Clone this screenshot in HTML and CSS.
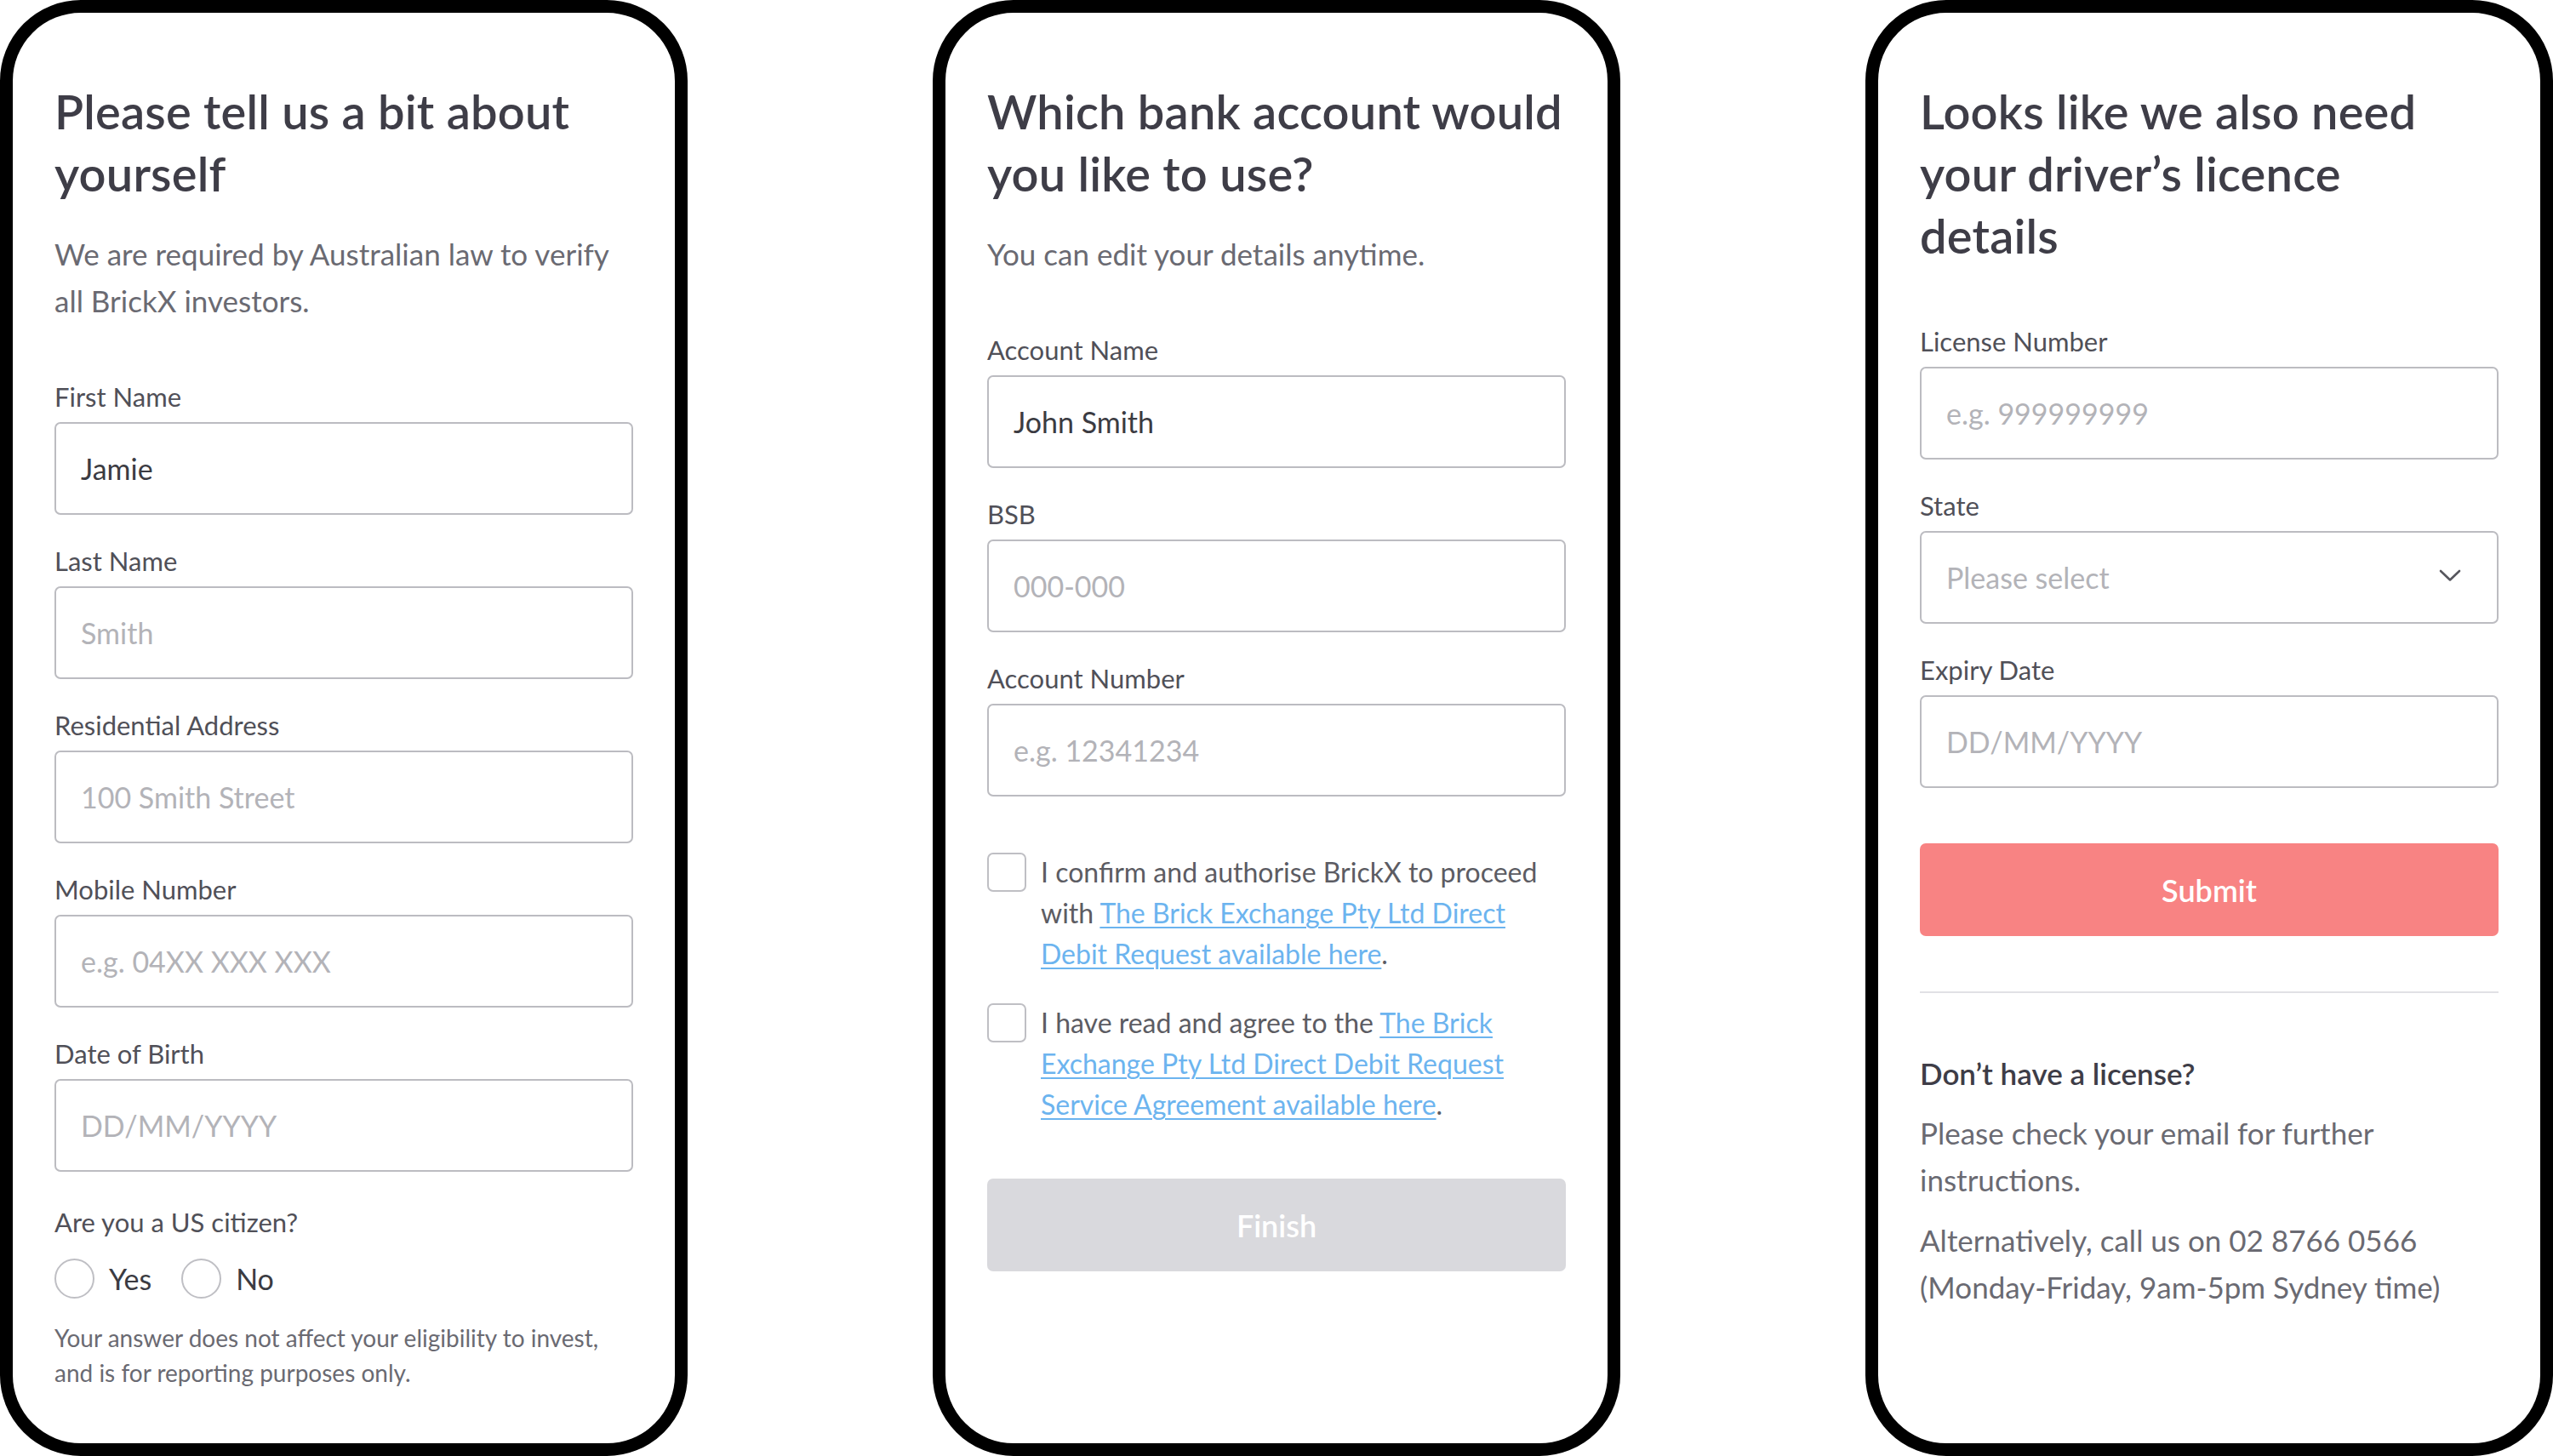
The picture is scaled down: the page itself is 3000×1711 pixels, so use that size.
FILE: index.html
```html
<!DOCTYPE html>
<html lang="en">
<head>
<meta charset="utf-8">
<title>BrickX onboarding</title>
<link rel="stylesheet" href="styles.css">
</head>
<body>
<main class="screens">
  <section class="phone">
    <h1 class="title">Please tell us a bit about yourself</h1>
    <p class="sub">We are required by Australian law to verify all BrickX investors.</p>
    <form class="form">
      <div class="field">
        <label class="label">First Name</label>
        <input class="input" type="text" value="Jamie">
      </div>
      <div class="field">
        <label class="label">Last Name</label>
        <input class="input" type="text" placeholder="Smith">
      </div>
      <div class="field">
        <label class="label">Residential Address</label>
        <input class="input" type="text" placeholder="100 Smith Street">
      </div>
      <div class="field">
        <label class="label">Mobile Number</label>
        <input class="input" type="text" placeholder="e.g. 04XX XXX XXX">
      </div>
      <div class="field">
        <label class="label">Date of Birth</label>
        <input class="input" type="text" placeholder="DD/MM/YYYY">
      </div>
      <div class="field field-radio">
        <label class="label">Are you a US citizen?</label>
        <div class="radios">
          <span class="opt"><span class="radio"></span><span class="opt-text">Yes</span></span>
          <span class="opt"><span class="radio"></span><span class="opt-text">No</span></span>
        </div>
        <p class="note">Your answer does not affect your eligibility to invest, and is for reporting purposes only.</p>
      </div>
    </form>
  </section>

  <section class="phone">
    <h1 class="title">Which bank account would you like to use?</h1>
    <p class="sub">You can edit your details anytime.</p>
    <form class="form">
      <div class="field">
        <label class="label">Account Name</label>
        <input class="input" type="text" value="John Smith">
      </div>
      <div class="field">
        <label class="label">BSB</label>
        <input class="input" type="text" placeholder="000-000">
      </div>
      <div class="field">
        <label class="label">Account Number</label>
        <input class="input" type="text" placeholder="e.g. 12341234">
      </div>
      <div class="check first">
        <span class="box"></span>
        <p class="check-text">I confirm and authorise BrickX to proceed with <a href="#">The Brick Exchange Pty Ltd Direct Debit Request available here</a>.</p>
      </div>
      <div class="check">
        <span class="box"></span>
        <p class="check-text">I have read and agree to the <a href="#">The Brick Exchange Pty Ltd Direct Debit Request Service Agreement available here</a>.</p>
      </div>
      <button class="btn btn-disabled" type="button">Finish</button>
    </form>
  </section>

  <section class="phone">
    <h1 class="title title-narrow">Looks like we also need your driver’s licence details</h1>
    <form class="form form-tight">
      <div class="field">
        <label class="label">License Number</label>
        <input class="input" type="text" placeholder="e.g. 999999999">
      </div>
      <div class="field">
        <label class="label">State</label>
        <div class="input select">
          <span class="ph">Please select</span>
          <svg class="chev" width="26" height="15" viewBox="0 0 26 15"><path d="M2 2 L13 12.5 L24 2" fill="none" stroke="#56565d" stroke-width="2.6" stroke-linecap="round" stroke-linejoin="round"/></svg>
        </div>
      </div>
      <div class="field">
        <label class="label">Expiry Date</label>
        <input class="input" type="text" placeholder="DD/MM/YYYY">
      </div>
      <button class="btn btn-primary" type="button">Submit</button>
    </form>
    <hr class="divider">
    <h2 class="help-title">Don’t have a license?</h2>
    <p class="help">Please check your email for further instructions.</p>
    <p class="help help-2">Alternatively, call us on 02 8766 0566 (Monday-Friday, 9am-5pm Sydney time)</p>
  </section>
</main>
</body>
</html>
```

FILE: styles.css
```css
html, body {
  margin: 0;
  padding: 0;
  background: #ffffff;
}

body {
  width: 3000px;
  height: 1711px;
  overflow: hidden;
  font-family: "Lato", "Noto Sans", sans-serif;
}

.screens {
  display: flex;
  gap: 288px;
  height: 1711px;
}

.phone {
  flex: none;
  width: 808px;
  height: 1711px;
  box-sizing: border-box;
  border: 15px solid #000;
  border-radius: 95px;
  padding: 79px 49px 0;
  background: #fff;
}

.title {
  margin: 0;
  font-size: 56px;
  line-height: 73px;
  font-weight: 600;
  letter-spacing: 0.2px;
  color: #3e3d47;
}

.title-narrow {
  max-width: 620px;
}

.sub {
  margin: 31px 0 0;
  font-size: 35px;
  line-height: 55px;
  color: #6a6a72;
}

.form {
  margin-top: 67px;
}

.form-tight {
  margin-top: 70px;
}

.field {
  margin-bottom: 36px;
}

.label {
  display: block;
  font-size: 31px;
  line-height: 36px;
  color: #505058;
  margin-bottom: 12px;
}

.input {
  display: block;
  width: 100%;
  height: 109px;
  box-sizing: border-box;
  border: 2px solid #bcbcc1;
  border-radius: 7px;
  padding: 0 29px;
  margin: 0;
  font-family: "Lato", "Noto Sans", sans-serif;
  font-size: 34px;
  color: #3b3b42;
  background: #fff;
  outline: none;
}

.input::placeholder {
  color: #b3b3b8;
  opacity: 1;
}

.select {
  display: flex;
  align-items: center;
  justify-content: space-between;
  padding-right: 42px;
}

.ph {
  color: #b3b3b8;
}

.chev {
  margin-top: -4px;
}

.field-radio {
  margin-top: 41px;
  margin-bottom: 0;
}

.radios {
  display: flex;
  gap: 35px;
  margin-top: 25px;
}

.opt {
  display: flex;
  align-items: center;
  gap: 17px;
}

.radio {
  width: 47px;
  height: 47px;
  box-sizing: border-box;
  border: 2px solid #bfbfc4;
  border-radius: 50%;
}

.opt-text {
  font-size: 34px;
  line-height: 47px;
  color: #3b3b42;
}

.note {
  margin: 26px 0 0;
  font-size: 28px;
  line-height: 41px;
  color: #6a6a72;
}

.check {
  display: flex;
  gap: 17px;
  margin-top: 33px;
}

.check.first {
  margin-top: 65px;
}

.box {
  flex: none;
  width: 46px;
  height: 46px;
  box-sizing: border-box;
  border: 2px solid #bfbfc4;
  border-radius: 7px;
  margin-top: 1px;
}

.check-text {
  margin: 0;
  font-size: 32px;
  line-height: 48px;
  color: #5c5c63;
}

.check-text a {
  color: #6cb4ef;
  text-decoration: underline;
  text-decoration-thickness: 2px;
  text-underline-offset: 4px;
}

.btn {
  display: block;
  width: 100%;
  height: 109px;
  border: 0;
  border-radius: 7px;
  font-family: "Lato", "Noto Sans", sans-serif;
  font-size: 36px;
  font-weight: 600;
  color: #fff;
}

.btn-disabled {
  margin-top: 63px;
  background: #d9d9dd;
}

.btn-primary {
  margin-top: 65px;
  background: #f88383;
}

.divider {
  margin: 65px 0 0;
  border: 0;
  height: 2px;
  background: #e1e1e5;
}

.help-title {
  margin: 74px 0 0;
  font-size: 35px;
  line-height: 40px;
  font-weight: 600;
  color: #3e3d47;
}

.help {
  margin: 23px 0 0;
  font-size: 35px;
  line-height: 55px;
  color: #6a6a72;
}

.help-2 {
  margin-top: 16px;
}
```
